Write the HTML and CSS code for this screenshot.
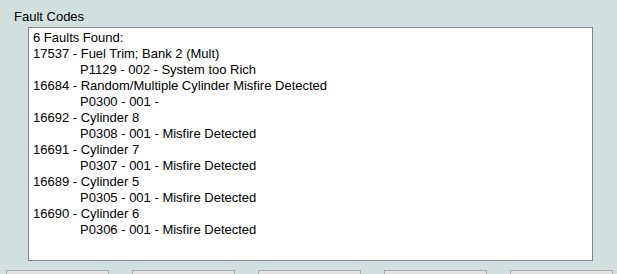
FILE: index.html
```html
<!DOCTYPE html>
<html lang="en">
<head>
    <meta charset="UTF-8">
    <title>Fault Codes</title>
    <link rel="stylesheet" href="styles.css">
</head>
<body>
    <section class="fault-group">
        <div class="group-label">Fault Codes</div>
        <div class="fault-list">
            <div class="line">6 Faults Found:</div>
            <div class="line">17537 - Fuel Trim; Bank 2 (Mult)</div>
            <div class="line sub">P1129 - 002 - System too Rich</div>
            <div class="line">16684 - Random/Multiple Cylinder Misfire Detected</div>
            <div class="line sub">P0300 - 001 -</div>
            <div class="line">16692 - Cylinder 8</div>
            <div class="line sub">P0308 - 001 - Misfire Detected</div>
            <div class="line">16691 - Cylinder 7</div>
            <div class="line sub">P0307 - 001 - Misfire Detected</div>
            <div class="line">16689 - Cylinder 5</div>
            <div class="line sub">P0305 - 001 - Misfire Detected</div>
            <div class="line">16690 - Cylinder 6</div>
            <div class="line sub">P0306 - 001 - Misfire Detected</div>
        </div>
    </section>

    <div class="button-row">
        <button class="button"></button>
        <button class="button"></button>
        <button class="button"></button>
        <button class="button"></button>
        <button class="button"></button>
    </div>
</body>
</html>
```

FILE: styles.css
```css
/* Base Styles */
body {
    font-family: "Liberation Sans", Arial, sans-serif;
    font-size: 13px;
    line-height: 16px;
    color: #000000;
    background: #d2dfdf;
    margin: 0;
    height: 274px;
    overflow: hidden;
}

/* Fault group */
.fault-group {
    padding-top: 9px;
}
.group-label {
    margin-left: 14px;
}
.fault-list {
    box-sizing: border-box;
    margin: 2px 0 0 28px;
    width: 565px;
    height: 234px;
    padding: 2px 4px 0;
    background: #ffffff;
    border: 1px solid #828790;
}
.line {
    white-space: nowrap;
}
.line.sub {
    padding-left: 47px;
}

/* Buttons */
.button-row {
    display: flex;
    gap: 23px;
    margin: 9px 0 0 6px;
}
.button {
    width: 103px;
    height: 4px;
    background: #e1e1e1;
    border: 1px solid #adadad;
    border-bottom: none;
    padding: 0;
}
```
